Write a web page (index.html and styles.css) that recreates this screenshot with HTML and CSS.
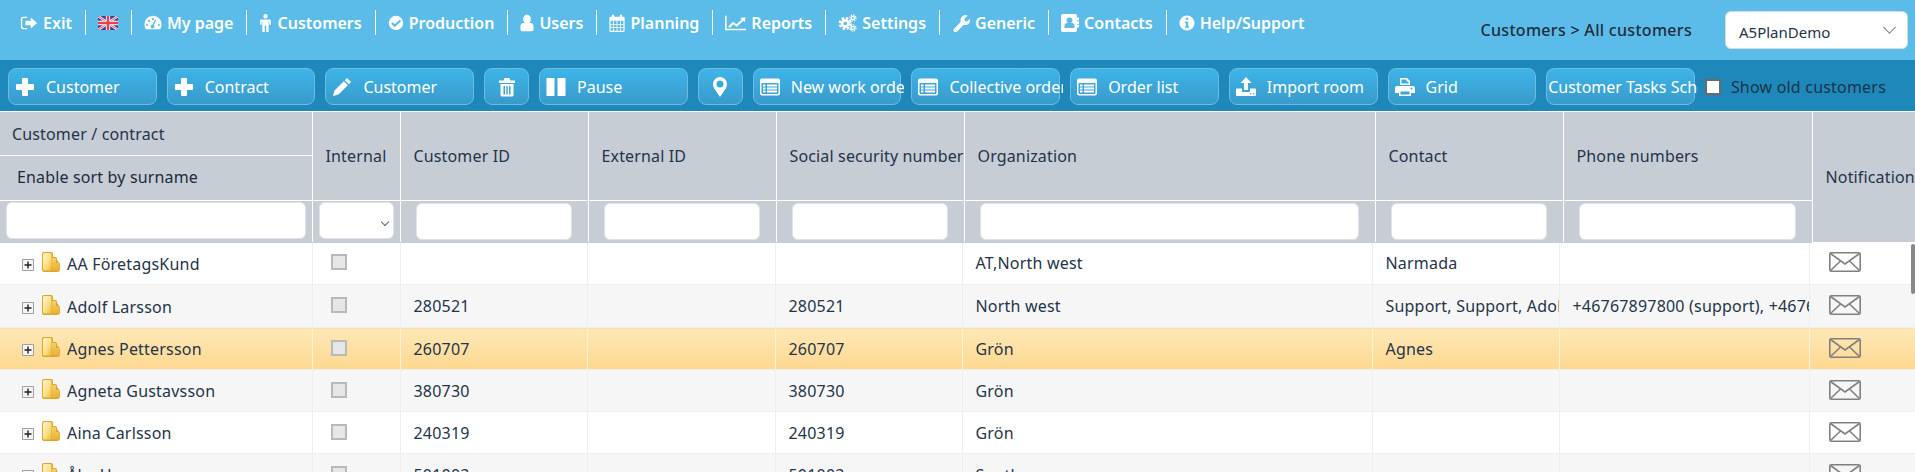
FILE: index.html
```html
<!DOCTYPE html>
<html lang="en">
<head>
    <meta charset="UTF-8">
    <meta name="viewport" content="width=device-width, initial-scale=1.0">
    <title>Customers</title>
    <link rel="stylesheet" href="styles.css">
</head>
<body>
    <svg class="sprite" aria-hidden="true">
        <defs>
            <linearGradient id="fold-a" x1="0" y1="0" x2="1" y2="1"><stop offset="0" stop-color="#fff6cf"/><stop offset=".55" stop-color="#fbe08a"/><stop offset="1" stop-color="#eeb93a"/></linearGradient>
            <linearGradient id="fold-b" x1="0" y1="0" x2="0" y2="1"><stop offset="0" stop-color="#f6d066"/><stop offset="1" stop-color="#e9b036"/></linearGradient>
        </defs>
        <symbol id="i-plus" viewBox="0 0 20 20"><path d="M8 1h4q1 0 1 1v5h5q1 0 1 1v4q0 1-1 1h-5v5q0 1-1 1H8q-1 0-1-1v-5H2q-1 0-1-1V8q0-1 1-1h5V2q0-1 1-1z"/></symbol>
        <symbol id="i-pencil" viewBox="0 0 20 20"><path d="M15 1l4 4-2.200 2.200-4-4zM11.800 4.200l4 4L6.500 17.500 1 19l1.500-5.500z"/></symbol>
        <symbol id="i-trash" viewBox="0 0 20 20"><path fill-rule="evenodd" d="M7.500 1h5l1 2.500H18V6H2V3.500h4.500zM3.500 7h13v11q0 1.500-1.500 1.500H5q-1.500 0-1.500-1.500zM6.500 9v8.500H8V9zm2.800 0v8.500h1.400V9zM12 9v8.500h1.500V9z"/></symbol>
        <symbol id="i-pause" viewBox="0 0 20 20"><path d="M1 1h7q.5 0 .5.500v17q0 .5-.5.500H1q-.5 0-.5-.5v-17q0-.5.500-.5zm11 0h7q.5 0 .5.500v17q0 .5-.5.500h-7q-.5 0-.5-.5v-17q0-.5.500-.5z"/></symbol>
        <symbol id="i-marker" viewBox="0 0 20 20"><path fill-rule="evenodd" d="M10 0a7 7 0 0 1 7 7q0 2-1 4l-6 9-6-9q-1-2-1-4a7 7 0 0 1 7-7zm0 3.500a3.500 3.500 0 1 0 0 7 3.500 3.500 0 0 0 0-7z"/></symbol>
        <symbol id="i-list" viewBox="0 0 20 20"><path fill-rule="evenodd" d="M2 1.500h16q2 0 2 2v13q0 2-2 2H2q-2 0-2-2v-13q0-2 2-2zm-.500 4.500v10q0 1 1 1h15q1 0 1-1V6zM3 7.500h2.500v2H3zm4 0h10v2H7zM3 10.500h2.500v2H3zm4 0h10v2H7zM3 13.500h2.500v2H3zm4 0h10v2H7z"/></symbol>
        <symbol id="i-upload" viewBox="0 0 20 20"><path fill-rule="evenodd" d="M10 0l5.500 6H12v7H8V6H4.500zM1 11.500h5V14q0 1 1 1h6q1 0 1-1v-2.500h5q1 0 1 1V18q0 1-1 1H1q-1 0-1-1v-5.500q0-1 1-1zM14.500 16a.8.8 0 1 0 0 1.600.8.8 0 0 0 0-1.600zm3 0a.8.8 0 1 0 0 1.600.8.800 0 0 0 0-1.600z"/></symbol>
        <symbol id="i-print" viewBox="0 0 20 20"><path fill-rule="evenodd" d="M5 1h7l3 3v4H5zM6.500 2.500v4h7v-2h-2v-2zM2 9h16q2 0 2 2v5h-4v3H4v-3H0v-5q0-2 2-2zm3.500 5.500V17.500h9v-3zM16.500 10.500a1 1 0 1 0 0 2 1 1 0 0 0 0-2z"/></symbol>
        <symbol id="i-exit" viewBox="0 0 20 20"><path d="M3.500 3H8v1.500H4Q2.500 4.500 2.500 6v8q0 1.500 1.500 1.500h4V17H3.500Q1 17 1 14.500v-9Q1 3 3.500 3z"/><path d="M12 4l7 6-7 6v-3.500H6v-5h6z"/></symbol>
        <symbol id="i-dash" viewBox="0 0 20 20"><path fill-rule="evenodd" d="M10 2a9.500 9.500 0 0 1 9.500 9.500q0 3-1.500 5.500H2Q.5 14.500.5 11.500A9.500 9.500 0 0 1 10 2zM10 4.500a1.200 1.200 0 1 0 0 2.400 1.200 1.200 0 0 0 0-2.400zM5.500 6.500a1.200 1.200 0 1 0 0 2.400 1.200 1.200 0 0 0 0-2.400zM3.500 11a1.200 1.200 0 1 0 0 2.400 1.200 1.200 0 0 0 0-2.400zM16.500 11a1.200 1.200 0 1 0 0 2.400 1.200 1.200 0 0 0 0-2.400zM13.800 6.500L10.800 12.500a2 2 0 1 1-1.500-.5l3-6z"/></symbol>
        <symbol id="i-male" viewBox="0 0 14 20"><path d="M7 0a2.500 2.500 0 1 1 0 5 2.500 2.500 0 0 1 0-5zM2.500 6h9q1.500 0 1.500 1.500V12h-1.800V8H10.500v12H7.800v-7H6.200v7H3.500V8h-.7v4H1V7.500Q1 6 2.500 6z"/></symbol>
        <symbol id="i-check" viewBox="0 0 20 20"><path fill-rule="evenodd" d="M10 1a9 9 0 1 1 0 18 9 9 0 0 1 0-18zm4.500 4.800L8.500 11.500 5.800 9 4 10.800l4.500 4.500 8-7.700z"/></symbol>
        <symbol id="i-user" viewBox="0 0 16 20"><path d="M8 .5a4.500 5 0 0 1 4.500 5q0 3-2 4.500h1.500q3.500 0 3.500 4v3Q15.500 19.500 13 19.500H3Q.5 19.500.5 17v-3q0-4 3.500-4h1.500q-2-1.500-2-4.500A4.500 5 0 0 1 8 .5z"/></symbol>
        <symbol id="i-cal" viewBox="0 0 20 20" preserveAspectRatio="none"><path fill-rule="evenodd" d="M5 .5a1.500 1.500 0 0 1 1.500 1.500v1h7V2a1.500 1.500 0 0 1 3 0v1H18q1.500 0 1.500 1.500v14Q19.500 20 18 20H2Q.5 20 .5 18.500v-14Q.5 3 2 3h1.500V2A1.500 1.500 0 0 1 5 .5zM2 7.500V11h3V7.500zm4 0V11h3.500V7.500zm4.500 0V11H14V7.500zm4.500 0V11h3V7.500zM2 12v2.500h3V12zm4 0v2.500h3.500V12zm4.500 0v2.500H14V12zm4.500 0v2.500h3V12zM2 15.500v3h3v-3zm4 0v3h3.500v-3zm4.500 0v3H14v-3zm4.500 0v3h3v-3z"/></symbol>
        <symbol id="i-chart" viewBox="0 0 20 20" preserveAspectRatio="none"><path d="M0 2h1.500v14.500H20V18H0z"/><path d="M3 14l4.500-5.500 3.500 3L16 6l-1.800-1.500L19.500 3.500 19 9l-1.500-1.500-6.300 6.800-3.500-3L5 15.500z"/></symbol>
        <symbol id="i-cogs" viewBox="0 0 20 20"><g fill="none" stroke="currentColor"><circle cx="7.500" cy="10.500" r="3.500" stroke-width="3"/><circle cx="7.500" cy="10.500" r="6" stroke-width="2.500" stroke-dasharray="2.800 1.900"/><circle cx="16" cy="4.500" r="1.800" stroke-width="1.500"/><circle cx="16" cy="4.500" r="3.400" stroke-width="1.400" stroke-dasharray="1.500 1.150"/><circle cx="16" cy="15.500" r="1.800" stroke-width="1.500"/><circle cx="16" cy="15.500" r="3.400" stroke-width="1.400" stroke-dasharray="1.500 1.150"/></g></symbol>
        <symbol id="i-wrench" viewBox="0 0 20 20"><path d="M14.500 1q1.500 0 3 1l-3.500 3v2.500l2.200 1L19.500 5.500q.5 1.500.2 3-.8 3.500-4.700 3.800-1 0-1.800-.3l-7.800 7.800q-1.500 1-3 0-1.500-1.500-.2-3.200L9.800 8.500q-.5-1-.3-2.300Q10.200 1.500 14.500 1z"/></symbol>
        <symbol id="i-book" viewBox="0 0 18 20" preserveAspectRatio="none"><path fill-rule="evenodd" d="M2 0h12q2 0 2 2v2h2v3h-2v1h2v3h-2v1h2v3h-2v3q0 2-2 2H2q-2 0-2-2V2q0-2 2-2zm6.500 4a3 3 0 0 0-3 3q0 2 1.500 3H6q-2.500 0-2.500 3v2.500h10V13q0-3-2.500-3h-1q1.500-1 1.500-3a3 3 0 0 0-3-3z"/></symbol>
        <symbol id="i-info" viewBox="0 0 20 20"><path fill-rule="evenodd" d="M10 .5a9.500 9.500 0 1 1 0 19 9.500 9.500 0 0 1 0-19zM8.500 3.500V6h3V3.500zM7.500 8v2h1v4h-1v2h5v-2h-1V8z"/></symbol>
        <symbol id="i-folder" viewBox="0 0 19 20">
            <path d="M2 0h7q2 0 2 2v3h2q2 0 2 2v1l3 4v5q0 3-3 3H2q-2 0-2-2V2q0-2 2-2z" fill="#dda52c"/>
            <path d="M10 6h3q1 0 1 1v4h3.500v6q0 1.500-1.500 1.500H10z" fill="url(#fold-b)"/>
            <path d="M2.500 1H8q1.500 0 1.500 1.500v16H2.500q-1.500 0-1.500-1.500V2.500Q1 1 2.500 1z" fill="url(#fold-a)"/>
        </symbol>
        <symbol id="i-expand" viewBox="0 0 12 12"><path d="M.5.500h11v11H.5z" fill="#f4f4f4" stroke="#a0a0a0"/><path d="M2.500 5.300h2.800V2.500h1.400v2.800h2.800v1.400H6.700v2.800H5.300V6.700H2.500z" fill="#222"/></symbol>
        <symbol id="i-mail" viewBox="0 0 32 20"><g fill="none" stroke="#808080" stroke-width="1.600"><rect x=".8" y=".8" width="30.400" height="18.400" rx="1.500"/><path d="M1.500 1.500L16 12 30.500 1.500M1.500 18.500l10-9.500M30.500 18.500l-10-9.500"/></g></symbol>
    </svg>

    <div class="topbar">
        <ul class="nav">
            <li><svg class="ico"><use href="#i-exit"/></svg>Exit</li>
            <li>
                <svg class="flag" viewBox="0 0 20 14">
                    <rect width="20" height="14" fill="#33448f"/>
                    <path d="M0 0l20 14M20 0L0 14" stroke="#eef" stroke-width="2.600"/>
                    <path d="M0 0l20 14M20 0L0 14" stroke="#e5576a" stroke-width="1"/>
                    <path d="M10 0v14M0 7h20" stroke="#fff" stroke-width="4.400"/>
                    <path d="M10 0v14M0 7h20" stroke="#e8404f" stroke-width="2.600"/>
                </svg>
            </li>
            <li><svg class="ico"><use href="#i-dash"/></svg>My page</li>
            <li><svg class="ico ico-13"><use href="#i-male"/></svg>Customers</li>
            <li><svg class="ico ico-16"><use href="#i-check"/></svg>Production</li>
            <li><svg class="ico ico-14"><use href="#i-user"/></svg>Users</li>
            <li><svg class="ico ico-16"><use href="#i-cal"/></svg>Planning</li>
            <li><svg class="ico ico-21"><use href="#i-chart"/></svg>Reports</li>
            <li><svg class="ico ico-19"><use href="#i-cogs"/></svg>Settings</li>
            <li><svg class="ico"><use href="#i-wrench"/></svg>Generic</li>
            <li><svg class="ico"><use href="#i-book"/></svg>Contacts</li>
            <li><svg class="ico ico-16"><use href="#i-info"/></svg>Help/Support</li>
        </ul>
        <div class="crumb">Customers &gt; All customers</div>
        <div class="site-select">A5PlanDemo</div>
    </div>

    <div class="toolbar">
        <div class="btn"><svg class="b-ico"><use href="#i-plus"/></svg><span class="b-txt">Customer</span></div>
        <div class="btn"><svg class="b-ico"><use href="#i-plus"/></svg><span class="b-txt">Contract</span></div>
        <div class="btn"><svg class="b-ico"><use href="#i-pencil"/></svg><span class="b-txt">Customer</span></div>
        <div class="btn btn-small"><svg class="b-ico"><use href="#i-trash"/></svg></div>
        <div class="btn"><svg class="b-ico"><use href="#i-pause"/></svg><span class="b-txt">Pause</span></div>
        <div class="btn btn-small"><svg class="b-ico"><use href="#i-marker"/></svg></div>
        <div class="btn"><svg class="b-ico"><use href="#i-list"/></svg><span class="b-txt">New work order</span></div>
        <div class="btn"><svg class="b-ico"><use href="#i-list"/></svg><span class="b-txt">Collective order</span></div>
        <div class="btn"><svg class="b-ico"><use href="#i-list"/></svg><span class="b-txt">Order list</span></div>
        <div class="btn"><svg class="b-ico"><use href="#i-upload"/></svg><span class="b-txt">Import room</span></div>
        <div class="btn"><svg class="b-ico"><use href="#i-print"/></svg><span class="b-txt">Grid</span></div>
        <div class="btn btn-plain"><span class="b-txt">Customer Tasks Schedule</span></div>
        <label class="old"><input type="checkbox">Show old customers</label>
    </div>

    <div class="grid">
        <table class="head">
            <colgroup><col class="c1"><col class="c2"><col class="c3"><col class="c4"><col class="c5"><col class="c6"><col class="c7"><col class="c8"><col class="c9"></colgroup>
            <tr class="titles">
                <th class="name-th">
                    <div class="name-top">Customer / contract</div>
                    <div class="name-sort">Enable sort by surname</div>
                </th>
                <th>Internal</th>
                <th>Customer ID</th>
                <th>External ID</th>
                <th>Social security number</th>
                <th>Organization</th>
                <th>Contact</th>
                <th>Phone numbers</th>
                <th rowspan="2">Notifications</th>
            </tr>
            <tr class="filters">
                <td class="f-name"><input type="text"></td>
                <td class="f-int"><div class="f-select"></div></td>
                <td><input type="text"></td>
                <td><input type="text"></td>
                <td><input type="text"></td>
                <td><input type="text"></td>
                <td><input type="text"></td>
                <td><input type="text"></td>
            </tr>
        </table>

        <table class="rows">
            <colgroup><col class="r1"><col class="r2"><col class="r3"><col class="r4"><col class="r5"><col class="r6"><col class="r7"><col class="r8"><col class="r9"></colgroup>
            <tr>
                <td class="cust"><svg class="exp"><use href="#i-expand"/></svg><svg class="fold"><use href="#i-folder"/></svg>AA FöretagsKund</td>
                <td><div class="box"></div></td><td></td><td></td><td></td>
                <td>AT,North west</td><td>Narmada</td><td></td>
                <td><svg class="mail"><use href="#i-mail"/></svg></td>
            </tr>
            <tr>
                <td class="cust"><svg class="exp"><use href="#i-expand"/></svg><svg class="fold"><use href="#i-folder"/></svg>Adolf Larsson</td>
                <td><div class="box"></div></td><td>280521</td><td></td><td>280521</td>
                <td>North west</td><td>Support, Support, Adolf Larsson</td><td>+46767897800 (support), +46767897800 (support)</td>
                <td><svg class="mail"><use href="#i-mail"/></svg></td>
            </tr>
            <tr class="sel">
                <td class="cust"><svg class="exp"><use href="#i-expand"/></svg><svg class="fold"><use href="#i-folder"/></svg>Agnes Pettersson</td>
                <td><div class="box"></div></td><td>260707</td><td></td><td>260707</td>
                <td>Grön</td><td>Agnes</td><td></td>
                <td><svg class="mail"><use href="#i-mail"/></svg></td>
            </tr>
            <tr class="alt">
                <td class="cust"><svg class="exp"><use href="#i-expand"/></svg><svg class="fold"><use href="#i-folder"/></svg>Agneta Gustavsson</td>
                <td><div class="box"></div></td><td>380730</td><td></td><td>380730</td>
                <td>Grön</td><td></td><td></td>
                <td><svg class="mail"><use href="#i-mail"/></svg></td>
            </tr>
            <tr>
                <td class="cust"><svg class="exp"><use href="#i-expand"/></svg><svg class="fold"><use href="#i-folder"/></svg>Aina Carlsson</td>
                <td><div class="box"></div></td><td>240319</td><td></td><td>240319</td>
                <td>Grön</td><td></td><td></td>
                <td><svg class="mail"><use href="#i-mail"/></svg></td>
            </tr>
            <tr class="alt">
                <td class="cust"><svg class="exp"><use href="#i-expand"/></svg><svg class="fold"><use href="#i-folder"/></svg>Åke Hansson</td>
                <td><div class="box"></div></td><td>501003</td><td></td><td>501003</td>
                <td>South</td><td></td><td></td>
                <td><svg class="mail"><use href="#i-mail"/></svg></td>
            </tr>
        </table>
        <div class="thumb"></div>
    </div>
</body>
</html>
```

FILE: styles.css
```css
*{
    margin: 0;
    padding: 0;
    box-sizing: border-box;
}

html, body{
    height: 472px;
    overflow: hidden;
}

body{
    background: #fff;
    font-family: "Noto Sans", "Open Sans", sans-serif;
    font-size: 16px;
    color: #24344a;
}

.sprite{
    position: absolute;
    width: 0;
    height: 0;
}

ul{
    list-style: none;
}

/* top bar */
.topbar{
    height: 60px;
    background: #5cbce9;
    display: flex;
    align-items: flex-start;
}

.nav{
    display: flex;
    margin: 10px 0 0 8px;
    color: #fff;
    font-weight: 600;
    font-size: 16px;
}

.nav li{
    height: 25px;
    display: flex;
    align-items: center;
    gap: 5px;
    padding: 0 13px 0 12px;
    border-right: 1px solid #fff;
    white-space: nowrap;
}

.nav li:last-child{
    border-right: none;
}

.ico{
    width: 18px;
    height: 18px;
    fill: currentColor;
}

.ico-13{ width: 13px; }
.ico-14{ width: 14px; }
.ico-16{ width: 16px; }
.ico-19{ width: 19px; }
.ico-21{ width: 21px; }

.flag{
    width: 20px;
    height: 14px;
}

.crumb{
    margin: 19px 0 0 auto;
    font-weight: 500;
    letter-spacing: .3px;
    color: #1f2d3d;
}

.site-select{
    position: relative;
    width: 183px;
    height: 38px;
    margin: 11px 7px 0 33px;
    padding: 10px 13px;
    background: #fff;
    border: 1px solid #d5dde3;
    border-radius: 6px;
    font-size: 15px;
    line-height: 20px;
}

.site-select::after{
    content: "";
    position: absolute;
    right: 13px;
    top: 11px;
    width: 8px;
    height: 8px;
    border-right: 1.500px solid #777;
    border-bottom: 1.500px solid #777;
    transform: rotate(45deg);
}

/* toolbar */
.toolbar{
    height: 52px;
    background: #1e88bb;
    border-bottom: 1px solid #fff;
    display: flex;
    align-items: flex-start;
    gap: 10px;
    padding: 8px 0 0 8px;
}

.btn{
    width: 148.700px;
    height: 37px;
    flex: none;
    display: flex;
    align-items: center;
    padding-left: 6px;
    color: #fff;
    background: linear-gradient(#3db4e8, #3a9acb);
    border: 1px solid #6cbde0;
    border-radius: 8px;
    white-space: nowrap;
}

.btn-small{
    width: 45px;
    padding-left: 0;
    justify-content: center;
}

.btn-plain{
    padding-left: 1px;
}

.b-ico{
    width: 20px;
    height: 20px;
    flex: none;
    margin-right: 11px;
    fill: currentColor;
}

.btn-small .b-ico{
    margin-right: 0;
}

.b-txt{
    flex: 1;
    min-width: 0;
    overflow: hidden;
    margin-right: -4px;
}

.old{
    display: flex;
    align-items: center;
    gap: 10px;
    margin-top: 8px;
    color: #1c3447;
    letter-spacing: .2px;
    white-space: nowrap;
}

.old input{
    appearance: none;
    width: 16px;
    height: 16px;
    background: #fff;
    border: 2px solid #6b6b6b;
}

/* grid */
.grid{
    position: relative;
}

.grid table{
    table-layout: fixed;
    border-collapse: collapse;
    width: 1930px;
}

.c1{ width: 312px; }
.c2{ width: 88px; }
.c3, .c4, .c5, .c7{ width: 188px; }
.c6{ width: 411px; }
.c8{ width: 249px; }

.r1{ width: 312px; }
.r2{ width: 88px; }
.r3{ width: 187px; }
.r4{ width: 188px; }
.r5{ width: 187px; }
.r6{ width: 410px; }
.r7{ width: 187px; }
.r8{ width: 250px; }

.head{
    background: #c6cdd5;
}

.head th, .head td{
    border-right: 1px solid #fff;
    border-bottom: 1px solid #fff;
}

.head th{
    padding-left: 13px;
    font-weight: 400;
    letter-spacing: .15px;
    text-align: left;
    white-space: nowrap;
    overflow: hidden;
}

.titles{
    height: 88px;
}

.name-th.name-th{
    padding: 0;
}

.name-top{
    height: 44px;
    line-height: 44px;
    padding-left: 12px;
    border-bottom: 1px solid #fff;
}

.name-sort{
    height: 43px;
    line-height: 43px;
    padding-left: 17px;
    color: #1c2b3a;
}

.filters{
    height: 42px;
}

.head tr.filters td{
    border-bottom: none;
    vertical-align: top;
    padding: 2px 16px 0 15px;
}

.head input{
    display: block;
    width: 100%;
    height: 37px;
    border: 1px solid #dfe3e7;
    border-radius: 6px;
    background: #fff;
}

.head tr.filters .f-name{
    padding: 1px 6px 0;
}

.head tr.filters .f-int{
    padding: 1px 6px 0;
}

.f-select{
    position: relative;
    height: 37px;
    background: #fff;
    border: 1px solid #dfe3e7;
    border-radius: 6px;
}

.f-select::after{
    content: "";
    position: absolute;
    right: 5px;
    top: 16px;
    width: 5px;
    height: 5px;
    border-right: 1.500px solid #666;
    border-bottom: 1.500px solid #666;
    transform: rotate(45deg);
}

.rows td{
    height: 42px;
    padding-left: 13px;
    border-right: 1px solid #eee;
    border-bottom: 1px solid #eee;
    letter-spacing: .2px;
    white-space: nowrap;
    overflow: hidden;
}

.rows tr:nth-child(2) td{
    height: 43px;
}

.rows tr:nth-child(2), .rows tr.alt{
    background: #f6f6f6;
}

.rows tr.sel td{
    background: linear-gradient(#fee8b8, #fed88f);
    border-right-color: #fdf1d8;
}

.rows td.cust{
    padding-left: 22px;
}

.exp{
    width: 12px;
    height: 12px;
    margin-right: 8px;
    vertical-align: -1px;
}

.fold{
    width: 19px;
    height: 20px;
    margin-right: 6px;
    vertical-align: -2px;
}

.box{
    width: 16px;
    height: 16px;
    margin: 0 0 2px 5px;
    background: #e6e6e6;
    border: 2px solid #b9b9b9;
}

.mail{
    display: block;
    width: 32px;
    height: 20px;
    margin: 0 0 2px 6px;
}

.thumb{
    position: absolute;
    top: 132px;
    right: 0;
    width: 4px;
    height: 50px;
    background: #888;
    border-radius: 2px;
}
```
